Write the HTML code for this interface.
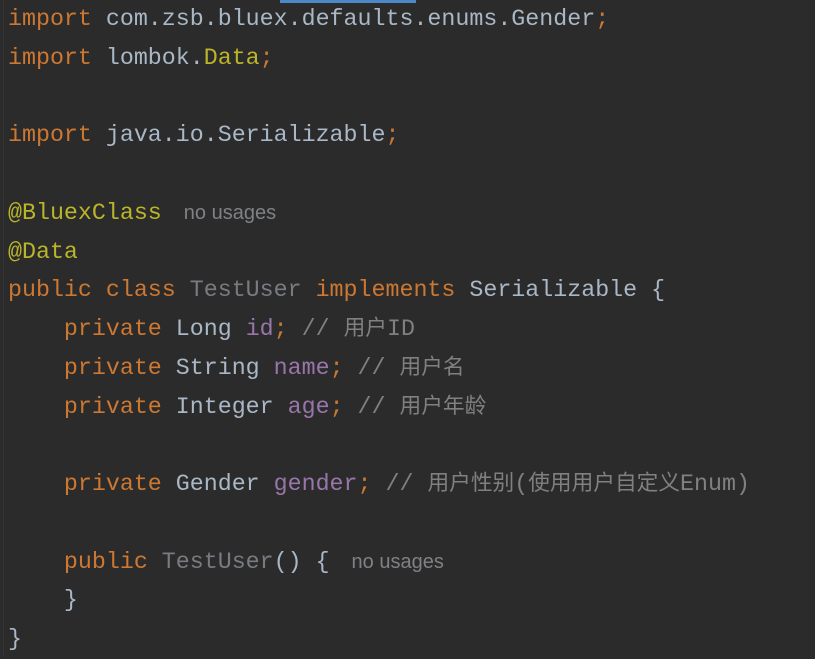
<!DOCTYPE html>
<html><head><meta charset="utf-8"><style>
html,body{margin:0;padding:0;background:#2b2b2b;width:815px;height:656px;overflow:hidden}
#bar{position:absolute;left:280px;top:0;width:136px;height:3px;background:#4a88c7}
#edge{position:absolute;left:3px;top:0;width:1px;height:656px;background:#353535}
#code{position:absolute;left:8px;top:0px;font-family:"Liberation Mono","Noto Sans CJK SC",monospace;font-size:23.3px;line-height:38.75px;color:#a9b7c6}
#code div{height:38.75px;white-space:pre;overflow:visible}
.k{color:#cc7832}.a{color:#bbb529}.f{color:#9876aa}.c{color:#808080}.g{color:#787b80}
.z{font-family:"Noto Sans CJK SC",sans-serif;font-size:21.7px;line-height:1}
.h{font-family:"Liberation Sans",sans-serif;font-size:20px;color:#7f8185;margin-left:8px;line-height:1}
</style></head><body>
<div id="bar"></div><div id="edge"></div>
<div id="code">
<div><span class="k">import</span> com.zsb.bluex.defaults.enums.Gender<span class="k">;</span></div>
<div><span class="k">import</span> lombok.<span class="a">Data</span><span class="k">;</span></div>
<div></div>
<div><span class="k">import</span> java.io.Serializable<span class="k">;</span></div>
<div></div>
<div><span class="a">@BluexClass</span> <span class="h">no usages</span></div>
<div><span class="a">@Data</span></div>
<div><span class="k">public class</span> <span class="g">TestUser</span> <span class="k">implements</span> Serializable {</div>
<div>    <span class="k">private</span> Long <span class="f">id</span><span class="k">;</span> <span class="c">// <span class="z">用户</span>ID</span></div>
<div>    <span class="k">private</span> String <span class="f">name</span><span class="k">;</span> <span class="c">// <span class="z">用户名</span></span></div>
<div>    <span class="k">private</span> Integer <span class="f">age</span><span class="k">;</span> <span class="c">// <span class="z">用户年龄</span></span></div>
<div></div>
<div>    <span class="k">private</span> Gender <span class="f">gender</span><span class="k">;</span> <span class="c">// <span class="z">用户性别</span>(<span class="z">使用用户自定义</span>Enum)</span></div>
<div></div>
<div>    <span class="k">public</span> <span class="g">TestUser</span>() { <span class="h">no usages</span></div>
<div>    }</div>
<div>}</div>
</div>
</body></html>
